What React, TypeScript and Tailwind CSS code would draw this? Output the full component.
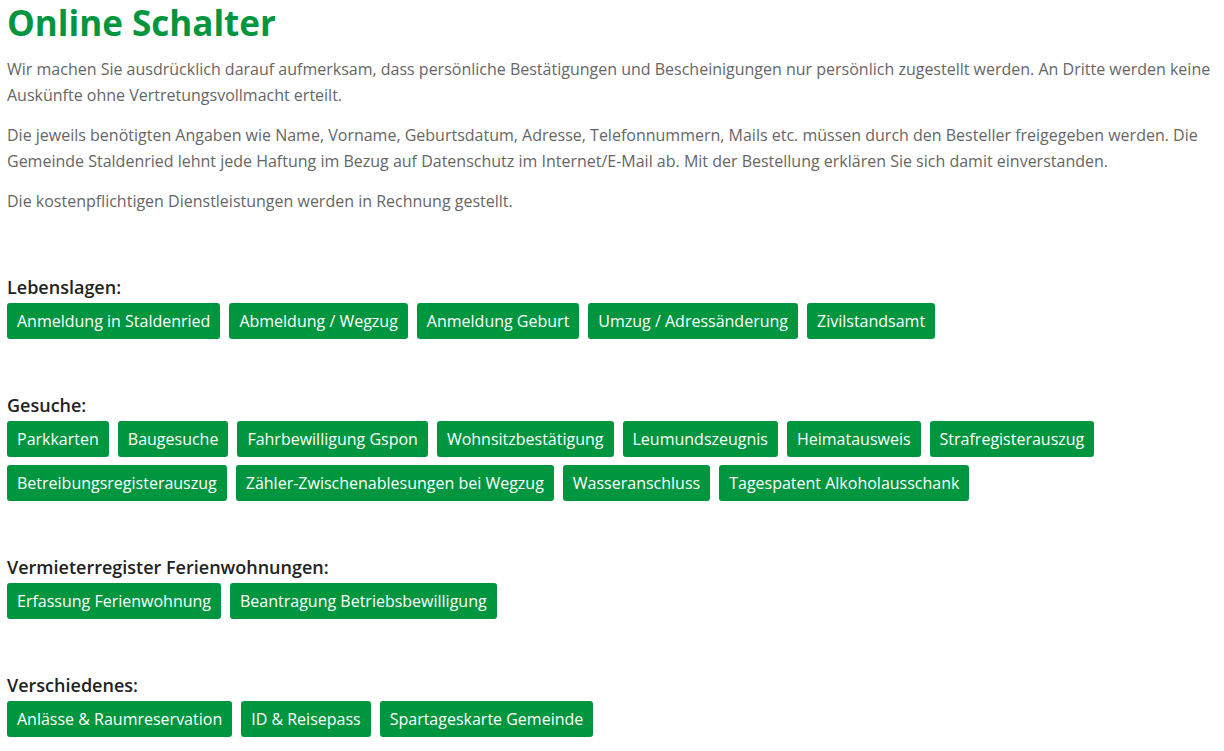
import React from 'react';

const sections: { title: string; items: string[] }[] = [
  {
    title: 'Lebenslagen:',
    items: ['Anmeldung in Staldenried', 'Abmeldung / Wegzug', 'Anmeldung Geburt', 'Umzug / Adressänderung', 'Zivilstandsamt'],
  },
  {
    title: 'Gesuche:',
    items: [
      'Parkkarten',
      'Baugesuche',
      'Fahrbewilligung Gspon',
      'Wohnsitzbestätigung',
      'Leumundszeugnis',
      'Heimatausweis',
      'Strafregisterauszug',
      'Betreibungsregisterauszug',
      'Zähler-Zwischenablesungen bei Wegzug',
      'Wasseranschluss',
      'Tagespatent Alkoholausschank',
    ],
  },
  {
    title: 'Vermieterregister Ferienwohnungen:',
    items: ['Erfassung Ferienwohnung', 'Beantragung Betriebsbewilligung'],
  },
  {
    title: 'Verschiedenes:',
    items: ['Anlässe & Raumreservation', 'ID & Reisepass', 'Spartageskarte Gemeinde'],
  },
];

export default function App() {
  return (
    <div className="min-h-screen bg-white font-['Open_Sans',sans-serif] px-[7px]">
      <h1 className="text-[35px] leading-[46px] font-bold text-[#00963f] mb-[10px]">Online Schalter</h1>

      <div className="text-[16px] leading-[26px] text-[#666666] max-w-[1210px]">
        <p className="mb-[14px]">
          Wir machen Sie ausdrücklich darauf aufmerksam, dass persönliche Bestätigungen und Bescheinigungen nur persönlich zugestellt werden. An Dritte werden keine Auskünfte ohne Vertretungsvollmacht erteilt.
        </p>
        <p className="mb-[14px]">
          Die jeweils benötigten Angaben wie Name, Vorname, Geburtsdatum, Adresse, Telefonnummern, Mails etc. müssen durch den Besteller freigegeben werden. Die Gemeinde Staldenried lehnt jede Haftung im Bezug auf Datenschutz im Internet/E-Mail ab. Mit der Bestellung erklären Sie sich damit einverstanden.
        </p>
        <p>Die kostenpflichtigen Dienstleistungen werden in Rechnung gestellt.</p>
      </div>

      <div className="mt-[61px] flex flex-col gap-[54px]">
        {sections.map(section => (
          <div key={section.title}>
            <h3 className="text-[18px] leading-[24px] font-semibold text-[#222222]">{section.title}</h3>
            <div className="mt-[4px] flex flex-wrap gap-x-[9px] gap-y-[8px]">
              {section.items.map(item => (
                <a
                  key={item}
                  href="#"
                  className="h-[36px] px-[10px] rounded-[3px] bg-[#00963f] text-white text-[16px] leading-[36px] whitespace-nowrap"
                >
                  {item}
                </a>
              ))}
            </div>
          </div>
        ))}
      </div>
    </div>
  );
}
